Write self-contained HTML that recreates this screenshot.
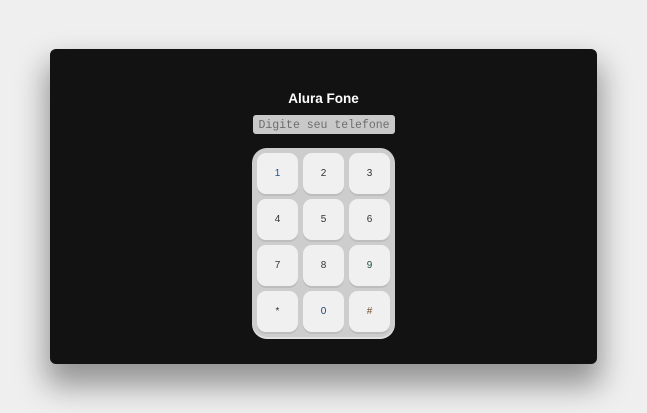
<!DOCTYPE html>
<html><head><style>
body{margin:0;width:647px;height:413px;background:#efefef;position:relative;overflow:hidden;font-family:"Liberation Sans",sans-serif}
.panel{position:absolute;left:50px;top:49px;width:547px;height:315px;background:#121212;border-radius:6px;box-shadow:0 18px 30px 4px rgba(0,0,0,.38)}
.t{position:absolute;left:0;width:647px;top:91px;text-align:center;color:#fff;font-weight:bold;font-size:13.5px}
.in{position:absolute;left:253px;top:115px;width:142px;height:19px;background:#c9c9c9;border-radius:3px;color:#6d6d6d;font-family:"Liberation Mono",monospace;font-size:11.5px;line-height:21px;text-align:center}
.pad{position:absolute;left:252px;top:148px;width:143px;height:189px;background:#cdcdcd;border-radius:15px;box-shadow:0 2px 0 #e0e0e0}
.b{position:absolute;width:41px;height:41px;background:#f0f0f0;border-radius:9px;font-size:10px;color:#333;text-align:center;line-height:41px;box-shadow:0 2px 0 #bdbdbd}
</style></head><body>
<div class="panel"></div>
<div class="t">Alura Fone</div>
<div class="in">Digite seu telefone</div>
<div class="pad"></div>
<div class="b" style="left:257px;top:153px;color:#1f4f8f">1</div>
<div class="b" style="left:303px;top:153px">2</div>
<div class="b" style="left:349px;top:153px">3</div>
<div class="b" style="left:257px;top:199px">4</div>
<div class="b" style="left:303px;top:199px">5</div>
<div class="b" style="left:349px;top:199px">6</div>
<div class="b" style="left:257px;top:245px">7</div>
<div class="b" style="left:303px;top:245px">8</div>
<div class="b" style="left:349px;top:245px;color:#1f4f3f">9</div>
<div class="b" style="left:257px;top:291px">*</div>
<div class="b" style="left:303px;top:291px;color:#1f3f6f">0</div>
<div class="b" style="left:349px;top:291px;color:#6f4f2f">#</div>
</body></html>
